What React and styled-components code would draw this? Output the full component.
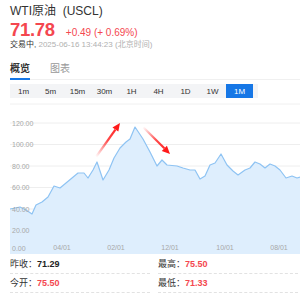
import styled, { createGlobalStyle } from "styled-components";

const GlobalStyle = createGlobalStyle`
  html, body {
    margin: 0;
    padding: 0;
    background: #fff;
  }
  body {
    font-family: "Liberation Sans", "Noto Sans CJK SC", sans-serif;
    color: #333;
  }
`;

const RED = "#f4474f";

// page coords read off the reference, shifted into the chart box below
const raw = [
  [10, 211], [20, 209], [26, 212], [32, 216], [36, 207], [42, 204], [48, 199],
  [54, 188], [60, 190], [66, 185], [72, 180], [78, 175], [84, 175], [88, 180],
  [93, 172], [97, 164], [103, 182], [109, 172], [114, 160], [120, 150],
  [126, 144], [130, 141], [135, 129], [143, 141], [150, 154], [157, 168],
  [162, 162], [167, 167], [177, 168], [183, 170], [190, 172], [195, 172],
  [200, 181], [205, 178], [210, 167], [215, 165], [221, 156], [227, 167],
  [233, 173], [238, 177], [245, 172], [250, 170], [255, 164], [260, 166],
  [265, 170], [270, 166], [275, 168], [280, 172], [286, 180], [292, 178],
  [297, 180], [300, 179],
];
const OX = 10;
const OY = 104;
const pts = raw.map(([x, y]) => [x - OX, y - OY]);
const CH = 152;
const CW = 290;
const linePath = pts.map(([x, y], i) => `${i ? "L" : "M"}${x},${y}`).join(" ");
const areaPath = `${linePath} L${CW},${CH} L0,${CH} Z`;

const yTicks = [
  ["120.00", 21],
  ["100.00", 42.5],
  ["80.00", 64],
  ["60.00", 85.5],
  ["40.00", 107],
  ["20.00", 128.5],
];
const xTicks = [
  ["04/01", 52],
  ["02/01", 106],
  ["12/01", 160],
  ["10/01", 215],
  ["08/01", 269],
];

const periods = ["1m", "5m", "15m", "30m", "1H", "4H", "1D", "1W", "1M"];

const Arrow = ({ id, x1, y1, x2, y2 }) => {
  const a = Math.atan2(y2 - y1, x2 - x1);
  const len = 8;
  const w = 3.6;
  const bx = x2 - Math.cos(a) * len;
  const by = y2 - Math.sin(a) * len;
  const nx = -Math.sin(a) * w;
  const ny = Math.cos(a) * w;
  return (
    <g>
      <defs>
        <linearGradient id={id} gradientUnits="userSpaceOnUse" x1={x1} y1={y1} x2={x2} y2={y2}>
          <stop offset="0" stopColor="#ff1a1a" stopOpacity="0" />
          <stop offset="0.5" stopColor="#ff1a1a" stopOpacity="0.8" />
          <stop offset="1" stopColor="#ff1a1a" stopOpacity="1" />
        </linearGradient>
      </defs>
      <line x1={x1} y1={y1} x2={bx} y2={by} stroke={`url(#${id})`} strokeWidth="2.2" />
      <polygon points={`${x2},${y2} ${bx + nx},${by + ny} ${bx - nx},${by - ny}`} fill="#ff1a1a" />
    </g>
  );
};

const Chart = () => (
  <ChartBox>
    <svg width={CW} height={CH} viewBox={`0 0 ${CW} ${CH}`}>
      <line x1="0" y1="2" x2={CW} y2="2" stroke="#f0f0f0" strokeWidth="1" />
      {yTicks.map(([, y]) => (
        <line key={y} x1="0" y1={y} x2={CW} y2={y} stroke="#eeeeee" strokeWidth="1" />
      ))}
      <path d={areaPath} fill="#deeefd" />
      <path d={linePath} fill="none" stroke="#8ec3f3" strokeWidth="1.2" strokeLinejoin="round" />
      {yTicks.map(([t, y]) => (
        <text key={t} x="2" y={y + 2.5} fontSize="7" fill="#a8a8a8" fontFamily="Liberation Sans, sans-serif">
          {t}
        </text>
      ))}
      <text x="2" y="148.5" fontSize="7" fill="#a8a8a8" fontFamily="Liberation Sans, sans-serif">
        0.00
      </text>
      {xTicks.map(([t, x]) => (
        <text key={t} x={x} y="148" fontSize="7" fill="#a8a8a8" textAnchor="middle" fontFamily="Liberation Sans, sans-serif">
          {t}
        </text>
      ))}
      <Arrow id="up" x1={86} y1={55} x2={110} y2={21} />
      <Arrow id="down" x1={133} y1={25} x2={160} y2={52} />
    </svg>
  </ChartBox>
);

const App = () => {
  return (
    <>
      <GlobalStyle />
      <Page>
        <Title>WTI原油&nbsp;&nbsp;(USCL)</Title>
        <PriceRow>
          <Price>71.78</Price>
          <Change>+0.49 (+ 0.69%)</Change>
        </PriceRow>
        <TimeRow>
          <b>交易中,</b> 2025-06-16 13:44:23 (北京时间)
        </TimeRow>
        <Tabs>
          <Tab $active>概览</Tab>
          <Tab>图表</Tab>
        </Tabs>
        <PeriodBar>
          {periods.map((p) => (
            <Period key={p} $active={p === "1M"}>
              {p}
            </Period>
          ))}
        </PeriodBar>
        <Chart />
        <Stats>
          <Stat>
            昨收：<StatValue>71.29</StatValue>
          </Stat>
          <Stat>
            最高：<StatValue $red>75.50</StatValue>
          </Stat>
          <Stat>
            今开：<StatValue $red>75.50</StatValue>
          </Stat>
          <Stat>
            最低：<StatValue $red>71.33</StatValue>
          </Stat>
        </Stats>
      </Page>
    </>
  );
};

export default App;

const Page = styled.div`
  width: 300px;
  height: 300px;
  box-sizing: border-box;
  padding: 3px 0 0 10px;
  overflow: hidden;
`;

const Title = styled.div`
  font-size: 12px;
  line-height: 16px;
  color: #333;
`;

const PriceRow = styled.div`
  display: flex;
  align-items: baseline;
  gap: 11px;
  height: 20px;
`;

const Price = styled.span`
  font-size: 18.5px;
  font-weight: bold;
  color: ${RED};
  letter-spacing: -0.3px;
`;

const Change = styled.span`
  font-size: 10px;
  color: ${RED};
`;

const TimeRow = styled.div`
  font-size: 8px;
  line-height: 12px;
  color: #b0b0b0;
  & b {
    font-weight: normal;
    color: #333;
  }
`;

const Tabs = styled.div`
  display: flex;
  gap: 20px;
  margin-top: 11px;
  border-bottom: 1px solid #f0f0f0;
`;

const Tab = styled.div`
  font-size: 10px;
  line-height: 14px;
  padding-bottom: 2px;
  color: ${({ $active }) => ($active ? "#333" : "#999")};
  font-weight: ${({ $active }) => ($active ? "bold" : "normal")};
  border-bottom: 2px solid ${({ $active }) => ($active ? "#1677e6" : "transparent")};
  margin-bottom: -1px;
`;

const PeriodBar = styled.div`
  display: grid;
  grid-template-columns: repeat(9, 27px);
  width: 248px;
  height: 14px;
  margin-top: 4px;
  background: #f3f4f6;
`;

const Period = styled.div`
  display: flex;
  align-items: center;
  justify-content: center;
  font-size: 8px;
  color: ${({ $active }) => ($active ? "#fff" : "#333")};
  background: ${({ $active }) => ($active ? "#1677e6" : "transparent")};
`;

const ChartBox = styled.div`
  margin-top: 4px;
  height: 152px;
  & svg {
    display: block;
  }
`;

const Stats = styled.div`
  display: grid;
  grid-template-columns: 140px 140px;
  column-gap: 8px;
  margin-top: 1px;
`;

const Stat = styled.div`
  font-size: 9px;
  line-height: 18px;
  color: #333;
  border-bottom: 1px dashed #e2e2e2;
`;

const StatValue = styled.span`
  font-weight: bold;
  color: ${({ $red }) => ($red ? RED : "#222")};
`;
